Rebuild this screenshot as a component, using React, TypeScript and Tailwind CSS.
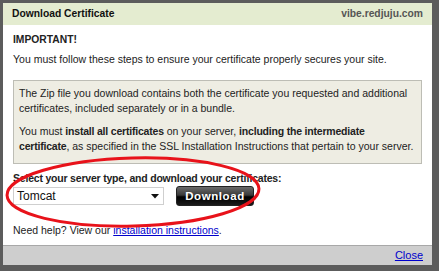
import React from "react";

export default function App() {
  return (
    <div className="relative w-[439px] h-[271px] bg-[#5c5c5c] pt-[3px] pl-[3px] pr-[7px] pb-[6px] overflow-hidden" style={{ fontFamily: '"Liberation Sans", Arial, sans-serif' }}>
      <div className="flex flex-col h-full bg-white">
        <div className="shrink-0 flex items-center justify-between h-[22px] bg-[#e4ecd0] pl-[9px] pr-[9px] text-[10.3px] font-bold">
          <span className="text-[#111]">Download Certificate</span>
          <span className="text-[#555]">vibe.redjuju.com</span>
        </div>
        <div className="flex-1 min-h-0 px-[10px] pt-[8px] text-[10.5px] text-[#222] leading-[14px]">
          <div className="font-bold text-[10.3px]">IMPORTANT!</div>
          <div className="mt-[5px]">You must follow these steps to ensure your certificate properly secures your site.</div>
          <div className="mt-[14px] bg-[#eeede3] border border-[#bdbdb5] pl-[5px] pr-[5px] pt-[5px] pb-[9px] leading-[15px]">
            <p>The Zip file you download contains both the certificate you requested and additional certificates, included separately or in a bundle.</p>
            <p className="mt-[8px]">You must <b className="tracking-[-0.2px]">install all certificates</b> on your server, <b className="tracking-[-0.2px]">including the intermediate</b> <b className="tracking-[-0.2px]">certificate</b>, as specified in the SSL Installation Instructions that pertain to your server.</p>
          </div>
          <div className="mt-[7px] font-bold tracking-[-0.2px]">Select your server type, and download your certificates:</div>
          <div className="mt-[1px] flex items-center gap-[12px] h-[20px]">
            <div className="w-[151px] h-[18px] border border-[#cfcfcf] bg-white flex items-center justify-between pl-[3px] pr-[4px] text-[12px] text-[#111]">
              <span>Tomcat</span>
              <svg width="8" height="5" viewBox="0 0 8 5"><path d="M0 0h8L4 4.5z" fill="#111" /></svg>
            </div>
            <div className="w-[78px] h-[20px] rounded-[3px] flex items-center justify-center text-white font-bold text-[11.5px] tracking-[0.6px] bg-[linear-gradient(#6a6a6a_0%,#3a3a3a_45%,#000_55%,#1a1a1a_100%)] border border-[#222]">
              Download
            </div>
          </div>
          <div className="mt-[17px]">Need help? View our <span className="text-[#0000cc] underline">installation instructions</span>.</div>
        </div>
        <div className="shrink-0 h-[20px] bg-[#cecece] border-t border-[#a8a8a8] flex items-center justify-end px-[9px] text-[11px]">
          <span className="text-[#0000cc] underline">Close</span>
        </div>
      </div>
      <svg className="absolute left-0 top-0 pointer-events-none" width="439" height="271">
        <ellipse cx="133" cy="192" rx="126" ry="34" transform="rotate(-1.5 133 192)" fill="none" stroke="#e8121a" strokeWidth="3" />
      </svg>
    </div>
  );
}
